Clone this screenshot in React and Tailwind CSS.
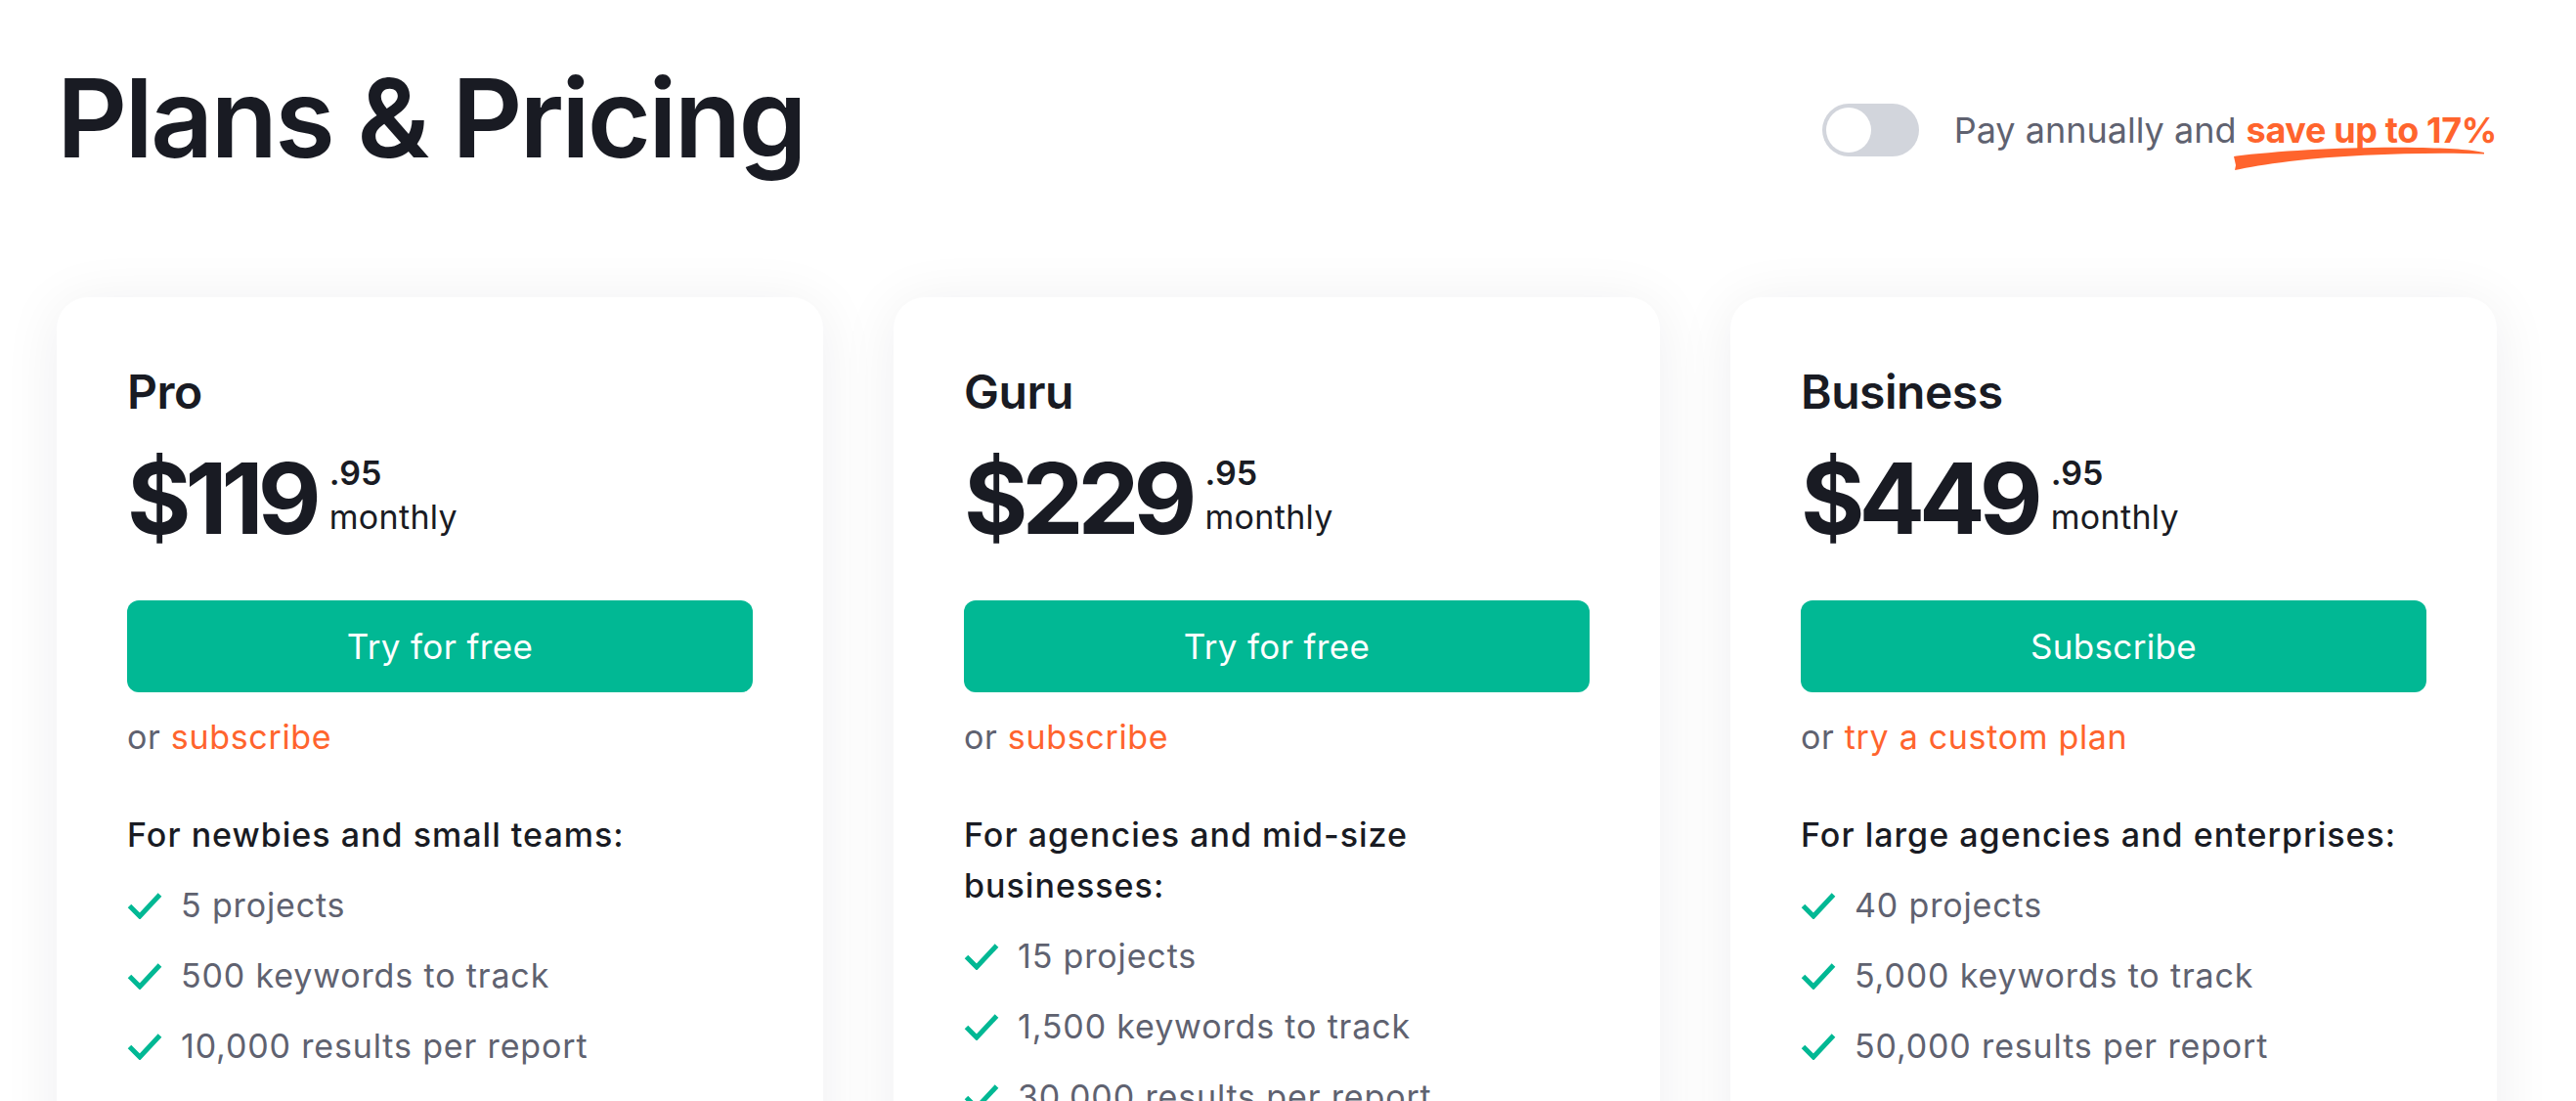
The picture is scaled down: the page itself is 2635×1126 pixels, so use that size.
const plans = [
  {
    name: "Pro",
    price: "$119",
    cents: ".95",
    cta: "Try for free",
    alt: "subscribe",
    audience: "For newbies and small teams:",
    features: ["5 projects", "500 keywords to track", "10,000 results per report"],
  },
  {
    name: "Guru",
    price: "$229",
    cents: ".95",
    cta: "Try for free",
    alt: "subscribe",
    audience: "For agencies and mid-size businesses:",
    features: ["15 projects", "1,500 keywords to track", "30,000 results per report"],
  },
  {
    name: "Business",
    price: "$449",
    cents: ".95",
    cta: "Subscribe",
    alt: "try a custom plan",
    audience: "For large agencies and enterprises:",
    features: ["40 projects", "5,000 keywords to track", "50,000 results per report"],
  },
];

function Check() {
  return (
    <svg width="36" height="28" viewBox="0 0 36 28" className="shrink-0">
      <path d="M2.5 14.5 L13 25 L33.5 3" fill="none" stroke="#01b894" strokeWidth="5" />
    </svg>
  );
}

function Swoosh() {
  return (
    <svg
      width="262"
      height="28"
      viewBox="0 0 262 28"
      className="pointer-events-none absolute left-[-16px] top-[38px]"
    >
      <path
        d="M3 11 C 50 5, 120 1, 190 2 C 225 2.5, 245 4, 259 7 L 259 8.5 C 200 6.5, 120 9, 60 16 C 35 19, 18 22, 4 25 L 5 20 Z"
        fill="#ff642d"
      />
    </svg>
  );
}

function PlanCard({ plan }) {
  return (
    <div className="rounded-[32px] bg-white px-[72px] pb-[72px] pt-[68px] shadow-[0_6px_60px_rgba(27,30,40,0.07)]">
      <div className="text-[48px] font-semibold leading-[58px] tracking-[-0.01em] text-[#191b23]">
        {plan.name}
      </div>

      <div className="mt-[30px] flex items-start">
        <span className="text-[100px] font-bold leading-[100px] tracking-[-0.06em] text-[#191b23]">
          {plan.price}
        </span>
        <div className="ml-[14px] mt-[7px] flex flex-col text-[#191b23]">
          <span className="text-[34px] font-semibold leading-[34px]">{plan.cents}</span>
          <span className="mt-[8px] text-[34px] leading-[40px] tracking-[0.01em]">monthly</span>
        </div>
      </div>

      <button className="mt-[54px] flex h-[94px] w-full items-center justify-center rounded-[12px] bg-[#01b894] text-[35px] tracking-[0.01em] text-white">
        {plan.cta}
      </button>

      <div className="mt-[20px] text-[34px] leading-[51px] tracking-[0.02em] text-[#5f6270]">
        or <span className="text-[#ff642d]">{plan.alt}</span>
      </div>

      <div className="mt-[49px] text-[34px] font-medium leading-[52px] tracking-[0.03em] text-[#191b23]">
        {plan.audience}
      </div>

      <ul>
        {plan.features.map((f) => (
          <li
            key={f}
            className="mt-[20px] flex items-center gap-[19px] text-[34px] leading-[52px] tracking-[0.025em] text-[#5f6270]"
          >
            <Check />
            <span>{f}</span>
          </li>
        ))}
      </ul>
    </div>
  );
}

export default function App() {
  return (
    <div className="min-h-screen overflow-hidden bg-white font-['Inter',sans-serif]">
      <div className="ml-[58px] w-[2496px]">
        <header className="flex items-start justify-between pt-[64px]">
          <h1 className="text-[112px] font-semibold leading-[112px] tracking-[-0.025em] text-[#191b23]">
            Plans &amp; Pricing
          </h1>

          <div className="mt-[42px] flex items-center">
            <div className="flex h-[54px] w-[99px] items-center rounded-full bg-[#d2d5dc] px-[4px]">
              <div className="h-[46px] w-[46px] rounded-full bg-white" />
            </div>
            <div className="ml-[36px] text-[36px] leading-[54px] text-[#5f6270]">
              Pay annually and{" "}
              <span className="relative font-bold tracking-[-0.01em] text-[#ff642d]">
                save up to 17%
                <Swoosh />
              </span>
            </div>
          </div>
        </header>

        <div className="mt-[128px] grid grid-cols-3 gap-[72px]">
          {plans.map((p) => (
            <PlanCard key={p.name} plan={p} />
          ))}
        </div>
      </div>
    </div>
  );
}
